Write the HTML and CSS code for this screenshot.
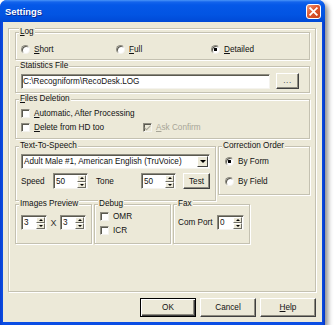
FILE: index.html
```html
<!DOCTYPE html>
<html>
<head>
<meta charset="utf-8">
<link rel="stylesheet" href="styles.css">
</head>
<body>
<div class="win">
  <div class="title">
    <span class="ttext">Settings</span>
    <span class="close">
      <svg width="15" height="15" viewBox="0 0 15 15">
        <defs>
          <linearGradient id="cg" x1="0" y1="0" x2="1" y2="1">
            <stop offset="0" stop-color="#F0A184"/>
            <stop offset="0.45" stop-color="#E0582F"/>
            <stop offset="1" stop-color="#C23F18"/>
          </linearGradient>
        </defs>
        <rect x="0.5" y="0.5" width="14" height="14" rx="2.5" fill="url(#cg)" stroke="#fff" stroke-width="1"/>
        <path d="M4.2 4.2 L10.8 10.8 M10.8 4.2 L4.2 10.8" stroke="#fff" stroke-width="1.8" stroke-linecap="square"/>
      </svg>
    </span>
  </div>
  <div class="client">
    <div class="frame">
      <div class="grp log">
        <span class="cap"><u>L</u>og</span>
        <div class="row">
          <span class="opt w95"><span class="rad"></span><span><u>S</u>hort</span></span>
          <span class="opt w95"><span class="rad"></span><span><u>F</u>ull</span></span>
          <span class="opt"><span class="rad on"></span><span><u>D</u>etailed</span></span>
        </div>
      </div>
      <div class="grp stats">
        <span class="cap">Statistics File</span>
        <div class="row">
          <span class="field path">C:\Recogniform\RecoDesk.LOG</span>
          <span class="btn dots">...</span>
        </div>
      </div>
      <div class="grp files">
        <span class="cap"><u>F</u>iles Deletion</span>
        <div class="row first">
          <span class="opt"><span class="chk"></span><span><u>A</u>utomatic, After Processing</span></span>
        </div>
        <div class="row">
          <span class="opt w122"><span class="chk"></span><span><u>D</u>elete from HD too</span></span>
          <span class="opt dis"><span class="chk grey">
            <svg width="7" height="7" viewBox="0 0 7 7"><path d="M0.5 3 L2.5 5 L6.5 1 L6.5 2.6 L2.5 6.6 L0.5 4.6 Z" fill="#A7A597"/></svg>
          </span><span><u>A</u>sk Confirm</span></span>
        </div>
      </div>
      <div class="mid">
        <div class="grp tts">
          <span class="cap">Text-To-Speech</span>
          <div class="field combo">
            <span class="val">Adult Male #1, American English (TruVoice)</span>
            <span class="dd"><span class="tri-down"></span></span>
          </div>
          <div class="row">
            <span class="lbl-speed">Speed</span>
            <span class="field spin w35"><span class="val">50</span><span class="arr"><span class="half"><span class="tri-up"></span></span><span class="half"><span class="tri-down s"></span></span></span></span>
            <span class="lbl-tone">Tone</span>
            <span class="field spin w35"><span class="val">50</span><span class="arr"><span class="half"><span class="tri-up"></span></span><span class="half"><span class="tri-down s"></span></span></span></span>
            <span class="btn test">Test</span>
          </div>
        </div>
        <div class="grp corr">
          <span class="cap">Correction Order</span>
          <div class="row r1"><span class="opt"><span class="rad on"></span><span>By Form</span></span></div>
          <div class="row r2"><span class="opt"><span class="rad"></span><span>By Field</span></span></div>
        </div>
      </div>
      <div class="bot">
        <div class="grp imgp">
          <span class="cap">Images Preview</span>
          <div class="row">
            <span class="field spin w26"><span class="val">3</span><span class="arr"><span class="half"><span class="tri-up"></span></span><span class="half"><span class="tri-down s"></span></span></span></span>
            <span class="x">X</span>
            <span class="field spin w26"><span class="val">3</span><span class="arr"><span class="half"><span class="tri-up"></span></span><span class="half"><span class="tri-down s"></span></span></span></span>
          </div>
        </div>
        <div class="grp dbg">
          <span class="cap">Debug</span>
          <div class="row"><span class="opt"><span class="chk"></span><span>OMR</span></span></div>
          <div class="row"><span class="opt"><span class="chk"></span><span>ICR</span></span></div>
        </div>
        <div class="grp fax">
          <span class="cap">Fax</span>
          <div class="row">
            <span class="lbl-com">Com Port</span>
            <span class="field spin w27"><span class="val">0</span><span class="arr"><span class="half"><span class="tri-up"></span></span><span class="half"><span class="tri-down s"></span></span></span></span>
          </div>
        </div>
      </div>
    </div>
    <div class="buttons">
      <span class="btn big def">OK</span>
      <span class="btn big">Cancel</span>
      <span class="btn big"><span><u>H</u>elp</span></span>
    </div>
  </div>
</div>
</body>
</html>
```

FILE: styles.css
```css
html, body {
  margin: 0;
  padding: 0;
  background: #fff;
}
body {
  font-family: "Liberation Sans", Arial, sans-serif;
  font-size: 8.2px;
  color: #111;
}
u {
  text-decoration: underline;
  text-underline-offset: 1px;
}
.win {
  width: 325px;
  height: 325px;
  box-sizing: border-box;
  background: linear-gradient(90deg, #0A3FD0 0, #0A4DE4 3px, #0A4DE4 322px, #0636C4 325px);
  border-radius: 7px 7px 0 0;
  box-shadow: 3px 3px 5px rgba(0, 0, 0, 0.45);
  display: flex;
  flex-direction: column;
  overflow: hidden;
}
.title {
  height: 22px;
  flex: none;
  display: flex;
  align-items: center;
  justify-content: space-between;
  padding: 0 4px 0 5px;
  background: linear-gradient(#4A95F8 0, #1464EC 2px, #0558E8 5px, #0254E2 15px, #0049D6 22px);
}
.ttext {
  color: #fff;
  font-weight: bold;
  font-size: 9.4px;
  text-shadow: 1px 1px #0A2A95;
}
.close {
  width: 15px;
  height: 15px;
  display: flex;
}
.client {
  flex: 1;
  margin: 0 3px 3px;
  background: #ECE9D8;
  display: flex;
  flex-direction: column;
}
.frame {
  margin: 6px 6px 0 5px;
  height: 264px;
  box-sizing: border-box;
  border: 1px solid #C4C1B1;
  box-shadow: inset 1px 1px #fff, 1px 1px #fff;
  padding: 3px 5px 0 6px;
  display: flex;
  flex-direction: column;
}
.grp {
  box-sizing: border-box;
  border: 1px solid #C4C1B1;
  box-shadow: inset 1px 1px #fff, 1px 1px #fff;
  flex: none;
}
.cap {
  display: block;
  width: fit-content;
  margin: -6px 0 0 3px;
  padding: 0 1px;
  background: #ECE9D8;
  line-height: 10px;
  height: 10px;
  white-space: nowrap;
}
.row {
  display: flex;
  align-items: center;
  white-space: nowrap;
}
.opt {
  display: flex;
  align-items: center;
  gap: 4px;
}
.w95 { width: 95px; }
.w122 { width: 122px; }

.rad {
  width: 9px;
  height: 9px;
  box-sizing: border-box;
  border-radius: 50%;
  background: #fff;
  border: 1px solid;
  border-color: #8E8C80 #F4F3EE #F4F3EE #8E8C80;
  box-shadow: inset 1px 1px #5A594F;
  flex: none;
}
.rad.on {
  background: radial-gradient(circle at 50% 50%, #000 0, #000 1.4px, #fff 1.9px);
}
.chk {
  width: 9px;
  height: 9px;
  box-sizing: border-box;
  background: #fff;
  border: 1px solid;
  border-color: #8E8C80 #F4F3EE #F4F3EE #8E8C80;
  box-shadow: inset 1px 1px #5A594F;
  flex: none;
  display: flex;
  align-items: center;
  justify-content: center;
}
.chk.grey {
  background: #ECE9D8;
}
.dis {
  color: #A7A597;
}

.field {
  box-sizing: border-box;
  background: #fff;
  border: 1px solid;
  border-color: #8E8C80 #F4F3EE #F4F3EE #8E8C80;
  box-shadow: inset 1px 1px #5A594F;
  display: flex;
  align-items: center;
  white-space: nowrap;
  overflow: hidden;
}
.field .val {
  flex: 1;
  padding-left: 2px;
  overflow: hidden;
}

.btn {
  box-sizing: border-box;
  background: #ECE9D8;
  border: 1px solid;
  border-color: #fff #404040 #404040 #fff;
  box-shadow: inset -1px -1px #8E8C80;
  display: flex;
  align-items: center;
  justify-content: center;
  white-space: nowrap;
  flex: none;
}

/* Log */
.log { height: 28px; }
.log .row { margin-top: 6px; height: 13px; padding-left: 5px; }

/* Stats */
.stats { height: 27px; margin-top: 6px; }
.stats .row { align-items: flex-end; padding-left: 5px; gap: 6px; margin-top: 2px; }
.path { width: 249px; height: 15px; padding-left: 1px; }
.dots { width: 23px; height: 16px; color: #555; letter-spacing: 0.5px; padding-bottom: 2px; }

/* Files */
.files { height: 40px; margin-top: 6px; }
.files .row { height: 14px; padding-left: 5px; }
.files .row.first { margin-top: 2px; }

/* Middle */
.mid { display: flex; gap: 2px; margin-top: 7px; align-items: flex-start; }
.tts { width: 201px; height: 55px; }
.combo { margin: 3px 0 0 5px; width: 189px; height: 15px; }
.combo .val { padding-left: 2px; }
.dd {
  width: 11px;
  height: 11px;
  margin-right: 1px;
  box-sizing: border-box;
  background: #ECE9D8;
  border: 1px solid;
  border-color: #fff #404040 #404040 #fff;
  display: flex;
  align-items: center;
  justify-content: center;
  flex: none;
}
.tri-down {
  width: 0;
  height: 0;
  border-left: 3px solid transparent;
  border-right: 3px solid transparent;
  border-top: 3px solid #000;
}
.tri-down.s {
  border-left-width: 2.5px;
  border-right-width: 2.5px;
  border-top-width: 2.5px;
}
.tri-up {
  width: 0;
  height: 0;
  border-left: 2.5px solid transparent;
  border-right: 2.5px solid transparent;
  border-bottom: 2.5px solid #000;
}
.tts .row { margin-top: 4px; padding-left: 5px; height: 16px; }
.lbl-speed { width: 32px; }
.lbl-tone { margin-left: 8px; width: 45px; }
.w35 { width: 35px; height: 16px; }
.w26 { width: 26px; height: 15px; }
.w27 { width: 27px; height: 15px; }
.spin .arr {
  width: 9px;
  align-self: stretch;
  margin: 1px 1px 0 0;
  display: flex;
  flex-direction: column;
  flex: none;
}
.spin .half {
  flex: 1;
  box-sizing: border-box;
  background: #ECE9D8;
  border: 1px solid;
  border-color: #fff #6E6D64 #6E6D64 #fff;
  display: flex;
  align-items: center;
  justify-content: center;
}
.test { margin-left: 7px; width: 27px; height: 16px; }

.corr { width: 92px; height: 49px; }
.corr .row { height: 13px; padding-left: 6px; }
.corr .r1 { margin-top: 4px; }
.corr .r2 { margin-top: 7px; }

/* Bottom */
.bot { display: flex; gap: 2px; margin-top: 3px; }
.bot .grp { width: 77px; height: 40px; }
.imgp .row { margin-top: 6px; padding-left: 5px; }
.x { width: 13px; text-align: center; font-size: 9px; color: #333; }
.dbg .row { height: 14px; padding-left: 5px; }
.fax .row { margin-top: 6px; padding-left: 4px; }
.lbl-com { width: 39px; }

/* Buttons */
.buttons {
  display: flex;
  justify-content: flex-end;
  gap: 4px;
  margin: 6px 6px 0 0;
}
.big { width: 56px; height: 19px; }
.def {
  border: 1px solid #000;
  box-shadow: inset 1px 1px #fff, inset -1px -1px #404040, inset -2px -2px #8E8C80;
}
```
